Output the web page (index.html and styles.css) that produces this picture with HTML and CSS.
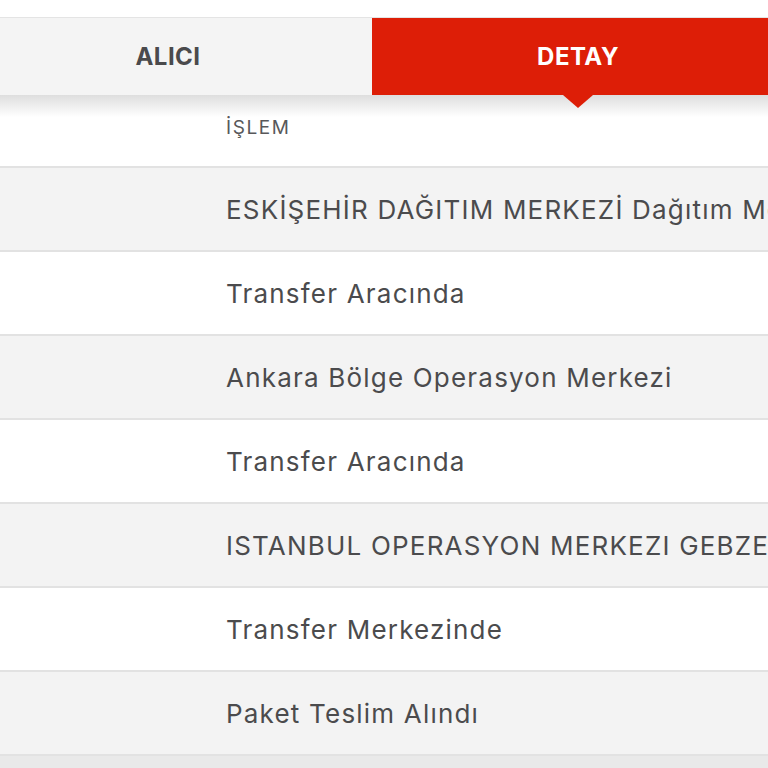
FILE: index.html
```html
<!DOCTYPE html>
<html lang="tr">
<head>
    <meta charset="UTF-8">
    <meta name="viewport" content="width=device-width, initial-scale=1.0">
    <title>Kargo Takip</title>
    <link rel="stylesheet" href="styles.css">
</head>
<body>
    <div class="tracking">
        <div class="tabs">
            <div class="tab">ALICI</div>
            <div class="tab active">DETAY</div>
        </div>

        <table class="detail-table">
            <thead>
                <tr>
                    <th class="col-date"></th>
                    <th>İŞLEM</th>
                </tr>
            </thead>
            <tbody>
                <tr><td class="col-date"></td><td>ESKİŞEHİR DAĞITIM MERKEZİ Dağıtım Merkezinde</td></tr>
                <tr><td class="col-date"></td><td>Transfer Aracında</td></tr>
                <tr><td class="col-date"></td><td>Ankara Bölge Operasyon Merkezi</td></tr>
                <tr><td class="col-date"></td><td>Transfer Aracında</td></tr>
                <tr><td class="col-date"></td><td>ISTANBUL OPERASYON MERKEZI GEBZE</td></tr>
                <tr><td class="col-date"></td><td>Transfer Merkezinde</td></tr>
                <tr><td class="col-date"></td><td>Paket Teslim Alındı</td></tr>
            </tbody>
        </table>
    </div>
</body>
</html>
```

FILE: styles.css
```css
body {
    margin: 0;
    padding: 0;
    background-color: #fff;
    font-family: Inter, 'Noto Sans', sans-serif;
    color: #4b4b4d;
    overflow: hidden;
}
.tracking {
    margin-top: 17px;
    margin-left: -36px;
    width: 820px;
    background-color: #e9e9e9;
    padding-bottom: 20px;
}
.tabs {
    display: flex;
    height: 77px;
    border-top: 1px solid #e4e4e4;
    background-color: #f4f4f4;
    position: relative;
    z-index: 1;
}
.tab {
    width: 408px;
    display: flex;
    align-items: center;
    justify-content: center;
    font-size: 24px;
    font-weight: bold;
    letter-spacing: 0.5px;
    color: #4a4a4c;
}
.tab.active {
    width: 412px;
    background-color: #dd1e07;
    color: #fff;
    position: relative;
}
/* little arrow under the active tab */
.tab.active::after {
    content: '';
    position: absolute;
    left: 50%;
    bottom: -13px;
    margin-left: -15px;
    border-left: 15px solid transparent;
    border-right: 15px solid transparent;
    border-top: 13px solid #dd1e07;
}
.detail-table {
    width: 100%;
    border-collapse: collapse;
    table-layout: fixed;
}
.detail-table th,
.detail-table td {
    text-align: left;
    padding: 0 0 0 16px;
    white-space: nowrap;
    overflow: hidden;
    border-bottom: 2px solid #e2e2e2;
}
.detail-table th {
    height: 72px;
    font-size: 19px;
    font-weight: normal;
    letter-spacing: 1.6px;
    color: #58585a;
    vertical-align: top;
    padding-top: 21px;
    box-sizing: border-box;
    background: linear-gradient(#dedede, #fff 22px);
}
.detail-table .col-date {
    width: 246px;
    padding: 0;
}
.detail-table td {
    height: 82px;
    font-size: 26px;
    letter-spacing: 1.2px;
}
.detail-table tbody tr:nth-child(odd) {
    background-color: #f3f3f3;
}
.detail-table tbody tr:nth-child(even) {
    background-color: #fff;
}
```
